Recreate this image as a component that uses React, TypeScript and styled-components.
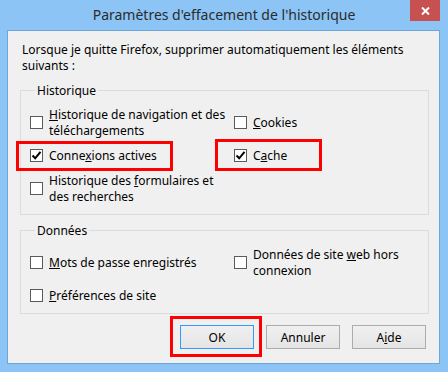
import styled, { createGlobalStyle } from 'styled-components';

const GlobalStyle = createGlobalStyle`
  html, body {
    margin: 0;
    padding: 0;
    background: #8cc4f6;
  }
  * {
    box-sizing: border-box;
  }
`;

const FONT = `'Noto Sans', 'Open Sans', sans-serif`;

const Window = styled.div`
  width: 448px;
  height: 372px;
  background: #8cc4f6;
  display: flex;
  flex-direction: column;
  font-family: ${FONT};
  font-size: 12px;
  color: #000;
`;

const TitleBar = styled.div`
  height: 30px;
  display: grid;
  grid-template-columns: 38px 1fr 30px;
  padding-right: 8px;
  align-items: start;
`;

const Title = styled.div`
  grid-column: 2;
  text-align: center;
  font-size: 14px;
  line-height: 30px;
  color: #2b2b2b;
  white-space: nowrap;
`;

const CloseButton = styled.div`
  grid-column: 3;
  height: 21px;
  background: #c75050;
  display: flex;
  align-items: center;
  justify-content: center;
`;

const Client = styled.div`
  flex: 1;
  margin: 0 8px 8px 7px;
  border: 1px solid #6fa6da;
  background: #f0f0f0;
  padding: 11px 10px 12px 12px;
  display: flex;
  flex-direction: column;
`;

const Intro = styled.p`
  margin: 0 0 0 2px;
  line-height: 16px;
`;

const Group = styled.fieldset<{ $top: number; $pt: number; $pb: number }>`
  margin: ${({ $top }) => $top}px 0 0 0;
  border: 1px solid #dcdcdc;
  padding: ${({ $pt, $pb }) => `${$pt}px 0 ${$pb}px 9px`};
  min-width: 0;
`;

const Legend = styled.legend`
  margin-left: 5px;
  padding: 0 2px;
  line-height: 15px;
`;

const Grid = styled.div`
  display: grid;
  grid-template-columns: 204px 1fr;
  grid-auto-rows: 33px;
`;

const Item = styled.label<{ $col?: number }>`
  position: relative;
  display: flex;
  align-items: center;
  gap: 6px;
  line-height: 16px;
  grid-column: ${({ $col }) => $col ?? 'auto'};
`;

const Box = styled.span`
  flex: none;
  width: 13px;
  height: 13px;
  border: 1px solid #5a5a5a;
  background: #fff;
  display: flex;
  align-items: center;
  justify-content: center;
`;

const Highlight = styled.span<{ $x: number; $y: number; $w: number; $h: number }>`
  position: absolute;
  left: ${({ $x }) => $x}px;
  top: ${({ $y }) => $y}px;
  width: ${({ $w }) => $w}px;
  height: ${({ $h }) => $h}px;
  border: 3px solid #ff0000;
  pointer-events: none;
`;

const Buttons = styled.div`
  margin: 11px 3px 0 0;
  display: flex;
  justify-content: flex-end;
  gap: 12px;
`;

const ButtonWrap = styled.span`
  position: relative;
  display: flex;
`;

const Button = styled.button<{ $default?: boolean }>`
  width: 74px;
  height: 24px;
  padding: 0;
  font-family: ${FONT};
  font-size: 12px;
  color: #000;
  background: linear-gradient(#f0f0f0, #e5e5e5);
  border: 1px solid ${({ $default }) => ($default ? '#3399ff' : '#acacac')};
`;

const Check = () => (
  <svg width="11" height="11" viewBox="0 0 11 11">
    <path d="M1.5 5.5 L4.2 8.3 L9.5 1.8" fill="none" stroke="#000" strokeWidth="2" />
  </svg>
);

function CheckItem({
  checked,
  col,
  children,
  highlight,
}: {
  checked?: boolean;
  col?: number;
  children: React.ReactNode;
  highlight?: { x: number; y: number; w: number; h: number };
}) {
  return (
    <Item $col={col}>
      <Box>{checked && <Check />}</Box>
      <span>{children}</span>
      {highlight && <Highlight $x={highlight.x} $y={highlight.y} $w={highlight.w} $h={highlight.h} />}
    </Item>
  );
}

export default function App() {
  return (
    <>
      <GlobalStyle />
      <Window>
        <TitleBar>
          <Title>Paramètres d'effacement de l'historique</Title>
          <CloseButton>
            <svg width="9" height="8" viewBox="0 0 9 8">
              <path d="M1 0.5 L8 7.5 M8 0.5 L1 7.5" stroke="#fff" strokeWidth="2" />
            </svg>
          </CloseButton>
        </TitleBar>
        <Client>
          <Intro>
            Lorsque je quitte Firefox, supprimer automatiquement les éléments
            <br />
            suivants :
          </Intro>
          <Group $top={9} $pt={8} $pb={9}>
            <Legend>Historique</Legend>
            <Grid>
              <CheckItem>
                <u>H</u>istorique de navigation et des
                <br />
                téléchargements
              </CheckItem>
              <CheckItem>
                <u>C</u>ookies
              </CheckItem>
              <CheckItem checked highlight={{ x: -14, y: 2, w: 157, h: 30 }}>
                Conne<u>x</u>ions actives
              </CheckItem>
              <CheckItem checked highlight={{ x: -19, y: 0, w: 107, h: 32 }}>
                C<u>a</u>che
              </CheckItem>
              <CheckItem col={1}>
                Historique des <u>f</u>ormulaires et
                <br />
                des recherches
              </CheckItem>
            </Grid>
          </Group>
          <Group $top={8} $pt={8} $pb={1}>
            <Legend>Données</Legend>
            <Grid>
              <CheckItem>
                <u>M</u>ots de passe enregistrés
              </CheckItem>
              <CheckItem>
                Données de site <u>w</u>eb hors
                <br />
                connexion
              </CheckItem>
              <CheckItem>
                <u>P</u>références de site
              </CheckItem>
            </Grid>
          </Group>
          <Buttons>
            <ButtonWrap>
              <Button $default>OK</Button>
              <Highlight $x={-10} $y={-9} $w={92} $h={41} />
            </ButtonWrap>
            <ButtonWrap>
              <Button>Annuler</Button>
            </ButtonWrap>
            <ButtonWrap>
              <Button>
                A<u>i</u>de
              </Button>
            </ButtonWrap>
          </Buttons>
        </Client>
      </Window>
    </>
  );
}
